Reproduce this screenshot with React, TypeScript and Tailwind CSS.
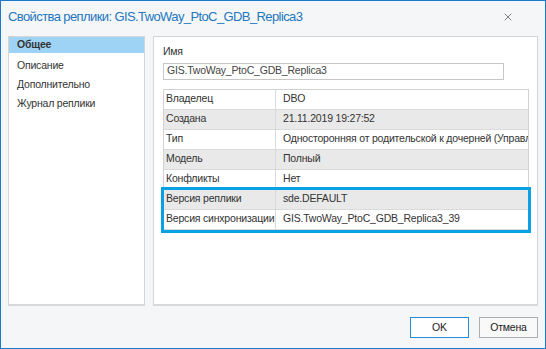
import { X } from 'lucide-react';

const rows = [
  { label: 'Владелец', value: 'DBO' },
  { label: 'Создана', value: '21.11.2019 19:27:52' },
  { label: 'Тип', value: 'Односторонняя от родительской к дочерней (Управляемая)' },
  { label: 'Модель', value: 'Полный' },
  { label: 'Конфликты', value: 'Нет' },
];

const versionRows = [
  { label: 'Версия реплики', value: 'sde.DEFAULT' },
  { label: 'Версия синхронизации', value: 'GIS.TwoWay_PtoC_GDB_Replica3_39' },
];

const navItems = ['Общее', 'Описание', 'Дополнительно', 'Журнал реплики'];

function Row({ label, value, gray }: { label: string; value: string; gray: boolean }) {
  return (
    <div className={`flex h-[20px] items-center border-b border-[#dadada] ${gray ? 'bg-[#e9e9e9]' : 'bg-white'}`}>
      <div className="w-[112px] shrink-0 h-full flex items-center pl-[2px] border-r border-[#dadada] whitespace-nowrap overflow-hidden">
        {label}
      </div>
      <div className="flex-1 min-w-0 h-full flex items-center pl-[7px] whitespace-nowrap overflow-hidden">{value}</div>
    </div>
  );
}

export default function App() {
  return (
    <div
      className="w-[546px] h-[349px] border border-[#1979ca] bg-[#f5f6f7] flex flex-col text-[10.5px] tracking-[-0.2px] text-[#1f1f1f]"
      style={{ fontFamily: '"Liberation Sans", Arial, sans-serif' }}
    >
      {/* Title */}
      <div className="h-[35px] flex items-center justify-between pl-[7px] pr-[31px] pb-[4px]">
        <span className="text-[13px] tracking-[-0.6px] text-[#2377c0] whitespace-nowrap">
          Свойства реплики: GIS.TwoWay_PtoC_GDB_Replica3
        </span>
        <X className="w-[12px] h-[12px] text-[#555]" strokeWidth={1.5} />
      </div>

      {/* Body */}
      <div className="flex gap-[8px] px-[7px]">
        <div className="w-[137px] shrink-0 h-[270px] bg-white border border-[#d4d4d4] border-b-2 border-b-[#d9d9d9]">
          {navItems.map((item, i) => (
            <div
              key={item}
              className={
                i === 0
                  ? 'h-[16px] flex items-center pl-[8px] bg-[#9fd3f5] font-bold text-[#333] mb-[3px]'
                  : 'h-[19px] flex items-center pl-[8px] text-[#333]'
              }
            >
              {item}
            </div>
          ))}
        </div>

        <div className="flex-1 min-w-0 h-[270px] bg-white border border-[#d4d4d4] border-b-2 border-b-[#d9d9d9] pl-[9px] pr-[8px] pt-[7px]">
          <div className="text-[#333] mb-[3px]">Имя</div>
          <div className="w-[341px] h-[17px] border border-[#c6c6c6] flex items-center pl-[3px] text-[#444]">
            GIS.TwoWay_PtoC_GDB_Replica3
          </div>

          <div className="mt-[9px] border border-b-0 border-[#d2d2d2] text-[#333]">
            {rows.map((r, i) => (
              <Row key={r.label} label={r.label} value={r.value} gray={i % 2 === 1} />
            ))}
            <div className="relative">
              {versionRows.map((r, i) => (
                <Row key={r.label} label={r.label} value={r.value} gray={i % 2 === 0} />
              ))}
              <div className="absolute -inset-[3px] border-[3px] border-[#0aa0e4]" />
            </div>
          </div>
        </div>
      </div>

      {/* Footer */}
      <div className="flex justify-end gap-[10px] pr-[7px] mt-[11px]">
        <button className="w-[59px] h-[21px] border border-[#2b8ad6] bg-white text-[#222]">OK</button>
        <button className="w-[59px] h-[21px] border border-[#adadad] bg-[#f9f9f9] text-[#222]">Отмена</button>
      </div>
    </div>
  );
}
